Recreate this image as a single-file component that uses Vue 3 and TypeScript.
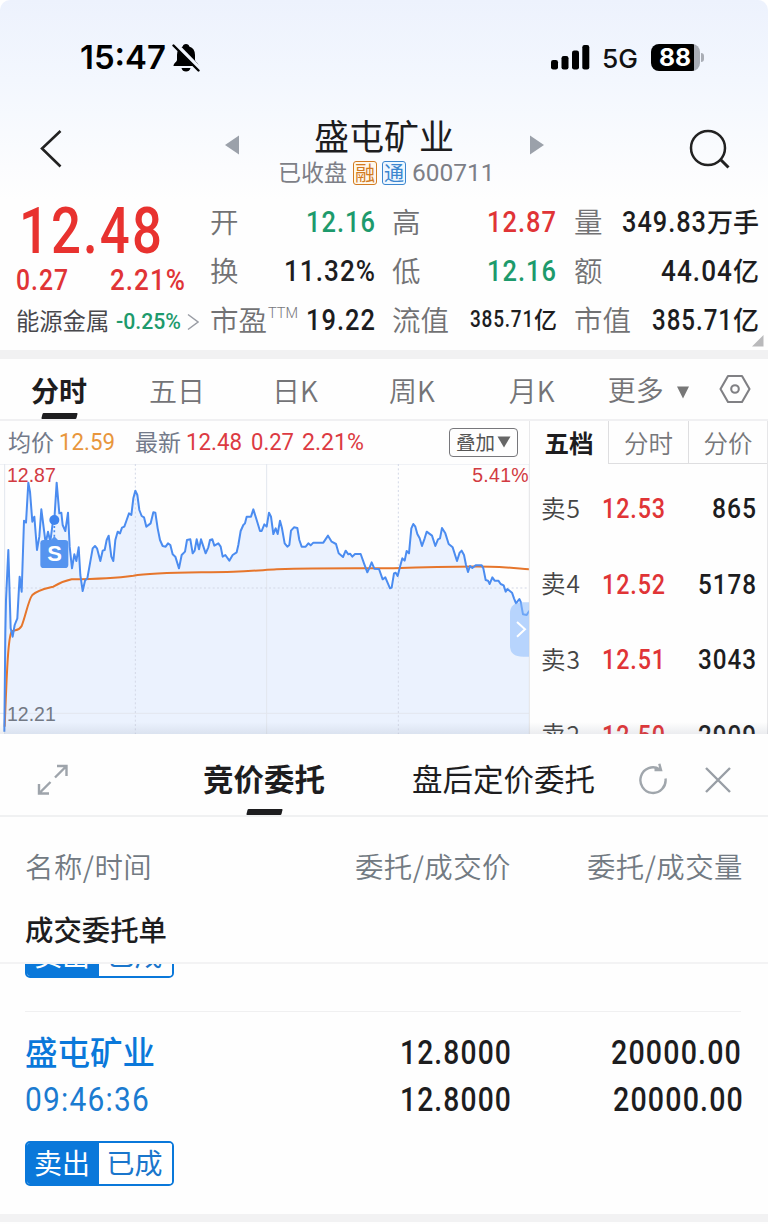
<script setup lang="ts">
import type { Directive } from 'vue'

/** Condenses a numeral run to the given width, keeping its layout box in step. */
const vFit: Directive<HTMLElement, number> = {
  mounted(el, { value }) {
    const natural = el.getBoundingClientRect().width
    el.style.transform = `scaleX(${value / natural})`
    el.style.marginRight = `${value - natural}px`
  },
}

interface Quote {
  label: string
  sup?: string
  value: string
  unit?: string
  width: number
  tone: 'up' | 'down' | 'plain'
  small?: boolean
}

const quotes: Quote[] = [
  { label: '开', value: '12.16', width: 70, tone: 'down' },
  { label: '高', value: '12.87', width: 70, tone: 'up' },
  { label: '量', value: '349.83', unit: '万手', width: 85, tone: 'plain' },
  { label: '换', value: '11.32%', width: 92, tone: 'plain' },
  { label: '低', value: '12.16', width: 70, tone: 'down' },
  { label: '额', value: '44.04', unit: '亿', width: 72, tone: 'plain' },
  { label: '市盈', sup: 'TTM', value: '19.22', width: 70, tone: 'plain' },
  { label: '流值', value: '385.71', unit: '亿', width: 64, tone: 'plain', small: true },
  { label: '市值', value: '385.71', unit: '亿', width: 81, tone: 'plain' },
]

const periods = ['五日', '日K', '周K', '月K']

const asks = [
  { name: '卖5', price: '12.53', volume: '865', width: 45 },
  { name: '卖4', price: '12.52', volume: '5178', width: 59 },
  { name: '卖3', price: '12.51', volume: '3043', width: 59 },
  { name: '卖2', price: '12.50', volume: '2909', width: 59 },
]

const firstHalf =
  '13,815 16,520 18,420 25,270 32,505 38,530 44,495 52,475 56,400 59,350 65,395 72,182 78,188 85,68 90,95 97,185 103,170 111,270 118,230 124,148 130,195 137,250 144,215 151,245 158,190 163,180 170,68 178,160 184,158 188,195 196,213 204,158 209,260 216,325 223,283 229,303 236,262 241,345 248,393 255,362 262,355 270,310 278,265 285,258 291,265 301,303 308,272 314,270 320,240 326,227 334,290 340,303 346,240 353,215 360,220 366,203 373,200 380,180 387,160 394,165 400,115 406,92 412,105 418,150 425,168 432,172 439,200 452,190 460,157 466,158 473,205 480,240 488,258 497,260 504,250 511,255 518,283 526,290 537,325 545,285 555,275 561,240 571,238 578,280 584,272 590,238 597,268 603,238 617,280 625,262 630,240 637,238 643,257 655,250 662,260 668,290 676,285 688,302 698,285 710,277 715,255 722,213 730,195 735,190 740,170 753,170 760,148 770,180 780,213'
const secondHalf =
  '5,213 13,193 20,200 27,158 33,170 40,222 47,205 53,222 60,182 66,205 74,250 82,260 88,255 93,212 102,202 112,204 118,240 125,260 137,260 145,250 152,256 160,248 190,248 204,227 215,245 228,252 236,280 249,291 257,272 265,283 270,281 277,290 285,282 302,282 312,310 322,337 329,322 335,307 343,326 357,327 368,358 376,352 390,385 395,383 402,340 407,338 413,348 420,320 427,295 434,302 440,273 447,280 454,205 460,192 466,200 472,222 479,235 486,258 494,235 500,215 516,227 526,258 534,238 540,235 546,204 556,220 566,252 578,262 591,303 599,278 605,272 612,285 618,315 624,336 630,318 637,324 647,316 665,316 670,325 677,360 684,362 689,372 697,352 704,362 715,362 722,372 731,376 737,395 742,387 756,398 762,415 768,430 778,417 782,425 789,463 800,465 808,452'

const shifted = secondHalf
  .split(' ')
  .map((p) => {
    const [x, y] = p.split(',').map(Number)
    return `${x + 780},${y}`
  })
  .join(' ')
const priceLine = `${firstHalf} ${shifted}`
const priceArea = `${priceLine} 1588,825 13,825`
</script>

<template>
  <div class="app">
    <div class="top">
      <div class="status">
        <span class="clock" v-fit="86">15:47</span>
        <svg class="bell" width="28" height="30" viewBox="0 0 28 30">
          <path d="M14 1c1.900 0 3.100 1 3.300 2.500 3.800 1.200 5.700 4.200 5.700 8.500v4.500c0 2.500 3.700 3.600 3.700 6.600H1.500c0-3 3.500-4.100 3.500-6.600V12c0-4.300 1.900-7.300 5.700-8.500C10.900 2 12.100 1 14 1z" />
          <path d="M9.500 25h9c-.5 2.400-2.200 3.500-4.500 3.500s-4-1.100-4.500-3.500z" />
          <path d="M3.500 1.500l24 24.500" stroke="#f1f5fd" stroke-width="5" />
          <path d="M1.500 2.500l25 25" stroke="#000" stroke-width="2.400" stroke-linecap="round" />
        </svg>
        <svg class="signal" width="39" height="25" viewBox="0 0 39 25">
          <rect x="0" y="15" width="7" height="9.500" rx="2.200" />
          <rect x="10.500" y="11" width="7" height="13.500" rx="2.200" />
          <rect x="21" y="5.500" width="7" height="19" rx="2.200" />
          <rect x="31.300" y="0" width="7" height="24.500" rx="2.200" />
        </svg>
        <span class="net" v-fit="36">5G</span>
        <div class="battery"><span v-fit="32">88</span></div>
        <i class="cap"></i>
      </div>

      <div class="nav">
        <svg class="back" width="24" height="40" viewBox="0 0 24 40" fill="none" stroke="#222" stroke-width="2.600">
          <path d="M21.500 2L3 19.500 21.500 37.500" />
        </svg>
        <svg class="prev" width="16" height="20" viewBox="0 0 16 20"><path d="M15 .5v19L1 10z" fill="#9ba1aa" /></svg>
        <div class="title">
          <div class="name">盛屯矿业</div>
          <div class="sub">
            <span>已收盘</span>
            <b class="chip rong">融</b>
            <b class="chip tong">通</b>
            <span class="code">600711</span>
          </div>
        </div>
        <svg class="next" width="16" height="20" viewBox="0 0 16 20"><path d="M1 .5v19L15 10z" fill="#9ba1aa" /></svg>
        <svg class="search" width="42" height="42" viewBox="0 0 42 42" fill="none" stroke="#222" stroke-width="2.500">
          <circle cx="19" cy="19" r="17" />
          <path d="M31 30l8.500 8.500" stroke-width="3" />
        </svg>
      </div>

      <div class="summary">
        <div class="last">
          <div class="big"><span v-fit="145">12.48</span></div>
          <div class="change"><span v-fit="53">0.27</span><span v-fit="76">2.21%</span></div>
          <div class="sector">
            <span class="sector-name">能源金属</span>
            <span class="sector-pct" v-fit="65">-0.25%</span>
            <svg width="12" height="18" viewBox="0 0 12 18" fill="none" stroke="#9a9da5" stroke-width="1.500">
              <path d="M1 1.500L11 9 1 16.500" />
            </svg>
          </div>
        </div>
        <div class="quotes">
          <div v-for="q in quotes" :key="q.label" class="quote" :class="[q.tone, { small: q.small }]">
            <span class="q-label">{{ q.label }}<sup v-if="q.sup">{{ q.sup }}</sup></span>
            <span class="q-value"><span class="num" v-fit="q.width">{{ q.value }}</span><em v-if="q.unit">{{ q.unit }}</em></span>
          </div>
        </div>
        <svg class="corner" width="12" height="12" viewBox="0 0 12 12"><path d="M11.500 0v11.500H0z" fill="#b9b9bb" /></svg>
      </div>
    </div>

    <div class="band"></div>

    <div class="periods">
      <span class="period active">分时</span>
      <span v-for="p in periods" :key="p" class="period">{{ p }}</span>
      <span class="period more">更多
        <svg width="14" height="13" viewBox="0 0 14 13"><path d="M1 .5h12L7 12.500z" fill="#777" /></svg>
      </span>
      <svg class="hex" width="32" height="30" viewBox="0 0 32 30" fill="none" stroke="#808084" stroke-width="2.100" stroke-linejoin="round">
        <path d="M9 2h14l7.500 13L23 28H9L1.500 15z" />
        <circle cx="16" cy="15" r="3.800" />
      </svg>
    </div>

    <div class="market">
      <div class="chart-side">
        <div class="legend">
          <span class="lg-label">均价</span><span class="avg" v-fit="56">12.59</span>
          <span class="lg-label latest">最新</span><span class="red" v-fit="56">12.48</span>
          <span class="red" v-fit="43">0.27</span><span class="red" v-fit="62">2.21%</span>
          <span class="overlay"><span>叠加</span><svg width="14" height="12" viewBox="0 0 14 12"><path d="M.5 .5h13L7 11.500z" fill="#666" /></svg></span>
        </div>
        <div class="chart">
          <svg width="530" height="271" viewBox="0 12 1590 813" fill="none">
            <polygon :points="priceArea" fill="#ebf2fe" />
            <g stroke="#e2e6ee" stroke-width="3">
              <path d="M0 12H1590M14 12V825M800 12V825M0 760H1590" />
            </g>
            <g stroke="#d3d8e6" stroke-width="3" stroke-dasharray="6 7">
              <path d="M406 12V825M1195 12V825M14 384H1588" />
            </g>
            <path
              d="M14 800C20 650 24 530 35 515C45 508 55 515 65 498C78 465 85 420 97 405C115 388 140 385 160 380C180 368 195 362 215 358C280 357 340 355 400 347C460 336 560 338 700 335C760 333 790 330 830 328C980 323 1080 325 1180 325C1260 322 1340 319 1470 320C1520 321 1550 325 1588 328"
              stroke="#e6762c" stroke-width="6"
            />
            <polyline :points="priceLine" stroke="#4b8cf0" stroke-width="6" stroke-linejoin="round" />
            <path d="M1588 12V825" stroke="#dde1e8" stroke-width="3" />
            <circle cx="163" cy="180" r="15" fill="#3f84ee" />
            <path d="M163 198V232" stroke="#4b8cf0" stroke-width="5" stroke-dasharray="6 7" />
            <path d="M150 243L163 229L177 243Z" fill="#5594ef" />
            <rect x="121" y="240" width="84" height="84" rx="10" fill="#5594ef" />
            <path d="M1590 427H1570Q1530 427 1530 460V558Q1530 590 1570 590H1590Z" fill="#8dbcfb" fill-opacity=".55" />
            <path d="M1551 486L1575 508L1551 530" stroke="#fff" stroke-width="6" />
          </svg>
          <span class="hi">12.87</span>
          <span class="pct">5.41%</span>
          <span class="lo">12.21</span>
          <span class="sell">S</span>
        </div>
      </div>
      <div class="book">
        <div class="book-tabs"><b>五档</b><span>分时</span><span>分价</span></div>
        <div v-for="a in asks" :key="a.name" class="ask">
          <span class="ask-name">{{ a.name }}</span>
          <span class="ask-price"><span v-fit="64">{{ a.price }}</span></span>
          <span class="ask-vol"><span v-fit="a.width">{{ a.volume }}</span></span>
        </div>
      </div>
      <div class="fade"></div>
    </div>

    <div class="order-tabs">
      <svg class="expand" width="32" height="32" viewBox="0 0 32 32" fill="none" stroke="#9ea4ab" stroke-width="2.400">
        <path d="M20 2h9.500v10M29 2.500L18 13.500M2 20v9.500h10M2.500 29L13.500 18" />
      </svg>
      <span class="order-tab active">竞价委托</span>
      <span class="order-tab after">盘后定价委托</span>
      <svg class="refresh" width="28" height="32" viewBox="0 0 28 32" fill="none" stroke="#a0a6ac" stroke-width="2.400">
        <path d="M26.500 15.500A12.600 12.800 0 1 1 20.500 6.200M15.500 7H22L20.300 .8" />
      </svg>
      <svg class="close" width="26" height="26" viewBox="0 0 26 26" fill="none" stroke="#989ea5" stroke-width="2.400">
        <path d="M1 1l24 24M25 1L1 25" />
      </svg>
    </div>

    <div class="columns">
      <span>名称/时间</span><span>委托/成交价</span><span>委托/成交量</span>
    </div>
    <div class="group">成交委托单</div>

    <div class="clipped">
      <div class="tag"><b>卖出</b><span>已成</span></div>
    </div>
    <div class="order">
      <div class="row">
        <span class="stock">盛屯矿业</span>
        <span class="val"><span v-fit="112">12.8000</span></span>
        <span class="val"><span v-fit="131">20000.00</span></span>
      </div>
      <div class="row second">
        <span class="time"><span v-fit="125">09:46:36</span></span>
        <span class="val"><span v-fit="112">12.8000</span></span>
        <span class="val"><span v-fit="131">20000.00</span></span>
      </div>
      <div class="tag"><b>卖出</b><span>已成</span></div>
    </div>
    <div class="foot"></div>
  </div>
</template>

<style>
body {
  background: #fff;
}
</style>

<style scoped>
* { box-sizing: border-box; }
.app {
  width: 768px;
  height: 1224px;
  overflow: hidden;
  background: #fefefe;
  color: #1d1d1f;
  font-family: Roboto, "Noto Sans CJK SC", sans-serif;
  line-height: 1;
  white-space: nowrap;
  border-radius: 10px 10px 0 0;
}
.app span, .app b, .app em { font-style: normal; flex: none; }
svg { display: block; flex: none; }

.clock, .net, .battery span, .num, .big span, .change span, .sector-pct,
.avg, .red, .ask-price span, .ask-vol span, .val span, .time span {
  display: inline-block;
  transform-origin: left center;
}
.num, .big span, .change span, .ask-price span, .ask-vol span, .val span, .time span {
  letter-spacing: .04em;
}

.top {
  height: 350px;
  background: linear-gradient(#edf2fd 0, #f3f7fe 80px, #fefefe 200px);
}

.status {
  display: flex;
  align-items: center;
  height: 115px;
  padding: 0 64px 0 80px;
}
.clock { font: 600 33px/1 Inter, sans-serif; color: #000; }
.bell { margin-left: 6px; }
.signal { margin-left: auto; margin-right: 12px; }
.net { font: 500 25.500px/1 Inter, sans-serif; color: #111; margin-top: 3px; }
.battery {
  display: flex;
  align-items: center;
  justify-content: center;
  width: 49px;
  height: 27px;
  margin-left: 13px;
  padding-right: 2px;
  border-radius: 8px;
  background: linear-gradient(90deg, #000 43px, #a9adb5 43px);
  color: #fff;
  font: 700 24px/1 Inter, sans-serif;
}
.cap { width: 3px; height: 9px; margin-left: 1px; border-radius: 0 4px 4px 0; background: #a9adb5; }

.nav {
  display: flex;
  height: 82px;
  padding: 0 38px 0 39px;
}
.back { margin-top: 14px; }
.prev { margin: 20px 0 0 161px; }
.title { width: 217px; margin-left: 38px; }
.name { margin: 6px 0 0 36px; font-size: 35px; line-height: 35px; }
.sub {
  display: flex;
  align-items: center;
  height: 26px;
  margin-top: 4px;
  color: #7d7f87;
  font-size: 23px;
}
.chip {
  display: flex;
  align-items: center;
  justify-content: center;
  width: 24px;
  height: 24px;
  margin-left: 5px;
  border: 1px solid;
  border-radius: 3px;
  font-size: 20px;
  line-height: 20px;
  padding-top: 1px;
  font-weight: 400;
}
.chip.rong { color: #d27b22; background: #fff8ec; margin-left: 6px; }
.chip.tong { color: #3c86cf; background: #eef7ff; }
.code { margin-left: 6px; font-size: 24.500px; }
.next { margin: 20px 0 0 34px; }
.search { margin: 14px 0 0 144px; }

.summary { position: relative; display: flex; height: 153px; }
.last { width: 210px; padding-left: 16px; flex: none; }
.big { margin: 3px 0 0 3px; height: 63px; font-size: 64px; line-height: 63px; font-weight: 500; color: #e8322f; }
.change {
  display: flex;
  justify-content: space-between;
  width: 170px;
  height: 35px;
  align-items: center;
  font-size: 29px;
  font-weight: 500;
  color: #e03436;
}
.sector { display: flex; align-items: center; height: 47px; }
.sector-name { font-size: 23.300px; color: #48484c; padding-top: 3px; }
.sector-pct { margin-left: 7px; font-size: 22px; font-weight: 500; color: #1d9a6c; }
.sector svg { margin-left: 6px; }

.quotes {
  display: grid;
  grid-template-columns: 166px 164px 185px;
  grid-template-rows: repeat(3, 49px);
  column-gap: 17px;
  width: 550px;
}
.quote { display: flex; align-items: center; justify-content: space-between; }
.q-label { position: relative; font-size: 28.500px; color: #727274; font-weight: 350; padding-top: 5px; }
.quote:nth-child(3n + 2) .q-label { margin-left: -1px; }
.q-label sup { position: absolute; left: 58px; top: 4px; font-size: 14.500px; color: #77777b; }
.q-value { display: flex; align-items: center; font-weight: 500; font-size: 30px; }
.q-value em { font-size: 26px; padding-top: 2px; }
.small .q-value { font-size: 23.500px; }
.small .q-value em { font-size: 23px; }
.up .q-value { color: #e03436; }
.down .q-value { color: #1d9a6c; }
.corner { position: absolute; right: 4px; bottom: 3px; }

.band { height: 9px; background: #f1f1f2; }

.periods {
  display: flex;
  height: 62px;
  padding: 0 17px 0 31px;
  align-items: center;
  border-bottom: 2px solid #f0f0f2;
  color: #747477;
  font: 350 28px/1 "Noto Sans CJK SC", sans-serif;
}
.period { position: relative; margin-right: 62px; line-height: 63px; height: 60px; }
.period:nth-child(2) { margin-right: 67px; }
.period:nth-child(3) { margin-right: 71px; }
.period:nth-child(4) { margin-right: 74px; }
.period:nth-child(5) { margin-right: 53px; }
.period.active { color: #1d1d1f; font-weight: 700; }
.period.active::after, .order-tab.active::after {
  content: "";
  position: absolute;
  left: 11px;
  bottom: 0;
  width: 35px;
  height: 6px;
  border-radius: 1px;
  background: #1d1d1f;
  transform: skewX(-14deg);
}
.period.more { display: flex; align-items: center; margin-right: 0; }
.more svg { margin: 6px 0 0 12px; }
.hex { margin: -1px 0 0 auto; }

.market { position: relative; display: flex; height: 313px; overflow: hidden; }
.chart-side { width: 530px; flex: none; border-right: 1px solid #e8e8ea; }
.legend { display: flex; align-items: center; height: 42px; padding-left: 8px; font-size: 24px; }
.lg-label { font-size: 23px; color: #737a8a; padding-top: 2px; }
.avg { margin-left: 5px; color: #e8963c; }
.latest { margin-left: 20px; }
.red { color: #dc3a42; margin-left: 8px; }
.latest + .red { margin-left: 5px; }
.latest + .red + .red { margin-left: 9px; }
.overlay {
  display: flex;
  align-items: center;
  justify-content: center;
  gap: 2px;
  width: 69px;
  height: 29px;
  margin-left: auto;
  margin-right: 11px;
  border: 1.500px solid #77777b;
  border-radius: 4px;
  color: #555;
  font-size: 19.500px;
}
.overlay span { padding-top: 3px; }
.chart { position: relative; height: 270px; margin-top: 1px; overflow: hidden; font-family: "Liberation Sans", Arial, sans-serif; font-size: 19.500px; }
.chart span { position: absolute; }
.hi { left: 7px; top: 2px; color: #d23b42; }
.pct { right: 0; top: 2px; color: #d23b42; letter-spacing: .3px; }
.lo { left: 7px; top: 241px; color: #737985; }
.sell { left: 41px; top: 79px; width: 27px; text-align: center; color: #fff; font-size: 22px; font-weight: 700; }

.book { width: 238px; flex: none; border-right: 1px solid #e6e6e8; }
.book-tabs { display: flex; height: 43px; font-size: 24.500px; line-height: 47px; color: #77777a; font-weight: 350; }
.book-tabs b { width: 78px; text-align: center; color: #1d1d1f; font-weight: 700; }
.book-tabs span { width: 80px; height: 43px; text-align: center; border-left: 1px solid #dedee0; border-bottom: 1px solid #dedee0; }
.book-tabs span:last-child { width: 79px; }
.ask { display: flex; align-items: center; height: 75.600px; padding: 15px 10px 0 11px; }
.ask-name { width: 61px; font: 350 24.500px/1 "Noto Sans CJK SC", sans-serif; color: #444; letter-spacing: 1px; margin-top: -3px; }
.ask-price { color: #e03436; font-size: 28px; font-weight: 500; }
.ask-vol { margin-left: auto; font-size: 28px; font-weight: 500; }
.fade { position: absolute; left: 0; right: 0; bottom: 0; height: 12px; background: linear-gradient(rgba(120, 130, 150, 0), rgba(120, 130, 150, .14)); }

.order-tabs { position: relative; display: flex; align-items: center; height: 83px; border-bottom: 2px solid #f0f1f2; }
.order-tab { position: relative; font-size: 30.500px; line-height: 92px; height: 80px; }
.expand { margin: 10px 0 0 37px; }
.order-tab.active { margin-left: 134px; font-weight: 700; }
.order-tab.active::after { left: 44px; }
.order-tab.after { margin-left: 87px; }
.refresh { margin: 8px 0 0 44px; }
.close { margin: 10px 0 0 38px; }

.columns {
  display: grid;
  grid-template-columns: 243px 243px 232px;
  height: 74px;
  padding: 24px 25px 0;
  align-items: center;
  color: #727a82;
  font: 350 28.400px/1 "Noto Sans CJK SC", sans-serif;
  letter-spacing: .5px;
}
.columns span + span { text-align: right; }
.group { height: 73px; padding: 27px 25px 0; font-size: 28.400px; line-height: 28px; border-bottom: 2px solid #f3f3f4; font-weight: 500; }
.clipped {
  display: flex;
  align-items: flex-end;
  height: 48px;
  margin: 0 27px 0 25px;
  padding-bottom: 33px;
  overflow: hidden;
  border-bottom: 1px solid #f0f0f1;
}
.tag {
  display: flex;
  width: 149px;
  height: 45px;
  flex: none;
  border: 2px solid #0a78da;
  border-radius: 5px;
  overflow: hidden;
  font-size: 28px;
  line-height: 43px;
}
.tag b { width: 72px; padding-right: 2px; text-align: center; background: #0a78da; color: #fff; font-weight: 400; }
.tag span { width: 73px; padding-right: 2px; text-align: center; color: #1a76cc; background: #fff; }
.order { height: 202px; padding: 18px 25px 0; }
.row {
  display: grid;
  grid-template-columns: 243px 244px 230px;
  height: 47px;
  align-items: center;
}
.row.second { grid-template-columns: 243px 244px 232px; }
.stock { font-size: 32.500px; font-weight: 500; color: #0a78da; padding-top: 2px; }
.time { font-size: 34px; color: #1b7bd0; margin-top: -4px; }
.val { text-align: right; font-size: 33px; font-weight: 500; margin-top: -2px; }
.order .tag { margin-top: 17px; }
.foot { height: 8px; background: #f2f2f3; }
</style>
